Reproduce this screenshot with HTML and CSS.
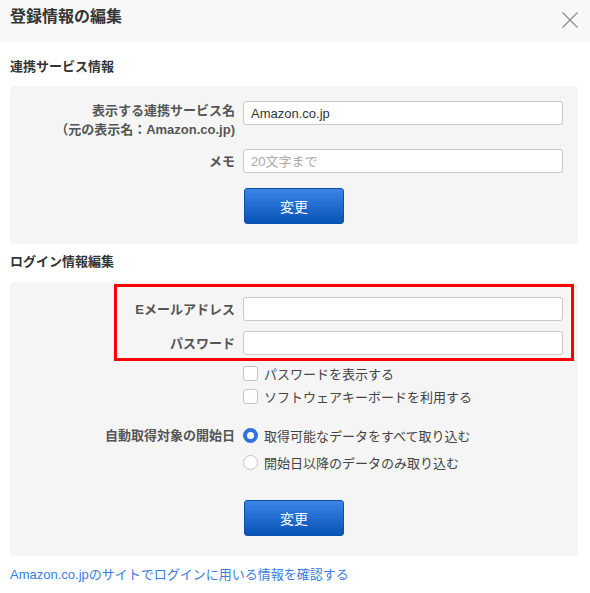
FILE: index.html
```html
<html>
  <head>
    <title>登録情報の編集</title>
    <meta name="viewport" content="width=device-width, initial-scale=1.0">
    <link rel="stylesheet" href="styles.css">
  </head>
  <body>
    <div class="dialog-header">
      <h1>登録情報の編集</h1>
      <button type="button" class="close-button" aria-label="閉じる">
        <svg width="16" height="16" viewBox="0 0 16 16"><path d="M0.5 0.5L15.5 15.5M15.5 0.5L0.5 15.5" stroke="#8a8a8a" stroke-width="1.2" fill="none"/></svg>
      </button>
    </div>

    <h2 class="section-title first">連携サービス情報</h2>
    <div class="panel panel-service">
      <div class="row row-top">
        <label class="row-label">表示する連携サービス名<br>（元の表示名：Amazon.co.jp)</label>
        <input type="text" class="text-input" value="Amazon.co.jp">
      </div>
      <div class="row row-memo">
        <label class="row-label">メモ</label>
        <input type="text" class="text-input" placeholder="20文字まで">
      </div>
      <button type="button" class="submit-button btn-service">変更</button>
    </div>

    <h2 class="section-title">ログイン情報編集</h2>
    <div class="panel panel-login">
      <div class="highlight">
        <div class="row">
          <label class="row-label short">Eメールアドレス</label>
          <input type="text" class="text-input">
        </div>
        <div class="row row-pass">
          <label class="row-label short">パスワード</label>
          <input type="password" class="text-input">
        </div>
      </div>

      <div class="options">
        <label class="check check-first"><span class="box"></span>パスワードを表示する</label>
        <label class="check"><span class="box"></span>ソフトウェアキーボードを利用する</label>
        <div class="row-label radio-label">自動取得対象の開始日</div>
        <label class="radio radio-first"><span class="dot checked"></span>取得可能なデータをすべて取り込む</label>
        <label class="radio"><span class="dot"></span>開始日以降のデータのみ取り込む</label>
      </div>

      <button type="button" class="submit-button btn-login">変更</button>
    </div>

    <a class="help-link" href="#">Amazon.co.jpのサイトでログインに用いる情報を確認する</a>
  </body>
</html>
```

FILE: styles.css
```css
body {
  margin: 0;
  padding: 0;
  background: #fff;
  color: #333;
  font-family: "Liberation Sans", "Noto Sans CJK JP", sans-serif;
  font-size: 13px;
}

.dialog-header {
  display: flex;
  justify-content: space-between;
  align-items: flex-start;
  height: 42px;
  padding: 0 12px 0 10px;
  background: #f8f8f8;
}
h1 {
  margin: 7px 0 0;
  font-size: 16px;
  line-height: 20px;
  font-weight: bold;
  color: #333;
}
.close-button {
  margin-top: 12px;
  padding: 0;
  width: 16px;
  height: 16px;
  border: none;
  background: none;
  cursor: pointer;
}
.close-button svg {
  display: block;
}

.section-title {
  margin: 8px 0 10px;
  padding: 0 10px;
  font-size: 13px;
  line-height: 20px;
  font-weight: bold;
  color: #333;
}
.section-title.first {
  margin: 15px 0 9px;
}

.panel {
  margin: 0 12px 0 10px;
  background: #f5f5f5;
  border-radius: 4px;
}
.panel-service {
  padding: 15px 15px 20px 0;
}
.panel-login {
  padding: 2px 0 20px 0;
}

.row {
  display: flex;
  align-items: center;
  gap: 8px;
}
.row-top {
  align-items: flex-start;
}
.row-memo {
  margin-top: 10px;
}
.row-label {
  flex: none;
  width: 225px;
  text-align: right;
  font-weight: bold;
  color: #555;
  line-height: 19px;
}
.row-label.short {
  width: 118px;
}

.text-input {
  flex: 1;
  min-width: 0;
  height: 24px;
  box-sizing: border-box;
  padding: 0 7px;
  border: 1px solid #c9c9c9;
  border-radius: 3px;
  background: #fff;
  color: #333;
  font-family: inherit;
  font-size: 13px;
}
.text-input::placeholder {
  color: #aaa;
}

.submit-button {
  display: block;
  width: 100px;
  height: 36px;
  border: 1px solid #0b4fab;
  border-radius: 3px;
  background: linear-gradient(#3c84e6, #0753b6);
  color: #fff;
  font-family: inherit;
  font-size: 14px;
  cursor: pointer;
}
.btn-service {
  margin: 15px 0 0 234px;
}
.btn-login {
  margin: 24px 0 0 234px;
}

.highlight {
  margin: 0 4px 0 104px;
  padding: 10px 8px 3px 0;
  border: 3px solid #f00;
}
.row-pass {
  margin-top: 10px;
}

.options {
  display: grid;
  grid-template-columns: 225px 1fr;
  column-gap: 8px;
  margin-top: 1px;
}
.check, .radio {
  grid-column: 2;
  display: flex;
  align-items: center;
  gap: 6px;
  color: #444;
}
.check {
  height: 23px;
}
.radio {
  height: 27px;
}
.radio-label {
  grid-column: 1;
  grid-row: 3;
  align-self: center;
  margin-top: 14px;
}
.radio-first {
  grid-row: 3;
  margin-top: 14px;
}
.box {
  width: 15px;
  height: 15px;
  box-sizing: border-box;
  border: 1px solid #c4c4c4;
  border-radius: 3px;
  background: #fff;
}
.dot {
  width: 15px;
  height: 15px;
  box-sizing: border-box;
  border: 1px solid #c4c4c4;
  border-radius: 50%;
  background: #fff;
}
.dot.checked {
  border: 4px solid #2f73db;
}

.help-link {
  display: block;
  margin: 9px 10px 0;
  line-height: 20px;
  color: #3b7ddd;
  text-decoration: none;
}
```
